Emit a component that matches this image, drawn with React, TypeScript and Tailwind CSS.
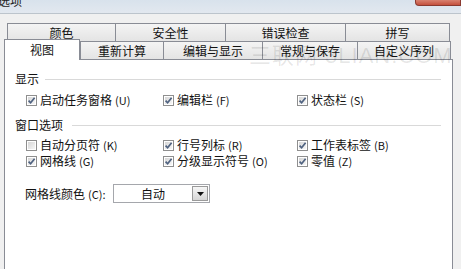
import type { ReactNode } from 'react';

const rows: { label: string; key: string; checked: boolean }[][] = [
  [
    { label: '启动任务窗格', key: 'U', checked: true },
    { label: '编辑栏', key: 'F', checked: true },
    { label: '状态栏', key: 'S', checked: true },
  ],
];

const windowRows: { label: string; key: string; checked: boolean }[][] = [
  [
    { label: '自动分页符', key: 'K', checked: false },
    { label: '行号列标', key: 'R', checked: true },
    { label: '工作表标签', key: 'B', checked: true },
  ],
  [
    { label: '网格线', key: 'G', checked: true },
    { label: '分级显示符号', key: 'O', checked: true },
    { label: '零值', key: 'Z', checked: true },
  ],
];

function CheckBox({ checked }: { checked: boolean }) {
  return (
    <svg width="11" height="11" viewBox="0 0 11 11" className="shrink-0">
      <defs>
        <linearGradient id="cbfill" x1="0" y1="0" x2="1" y2="1">
          <stop offset="0" stopColor="#d6d6d6" />
          <stop offset="1" stopColor="#f7f7f7" />
        </linearGradient>
      </defs>
      <rect x="0.5" y="0.5" width="10" height="10" fill="#fff" stroke="#8f8f8f" />
      <rect x="2" y="2" width="7" height="7" fill="url(#cbfill)" />
      {checked && (
        <path d="M2.6 5.6 L4.6 7.8 L8.6 2.8" fill="none" stroke="#4f6280" strokeWidth="1.7" />
      )}
    </svg>
  );
}

function Option({ label, hot, checked }: { label: string; hot: string; checked: boolean }) {
  return (
    <div className="flex h-[16px] items-center gap-[3px]">
      <CheckBox checked={checked} />
      <span className="whitespace-nowrap">
        {label}
        <span className="ml-[3px] text-[11px]">({hot})</span>
      </span>
    </div>
  );
}

function GroupTitle({ children, gap }: { children: ReactNode; gap: string }) {
  return (
    <div className="flex h-[14px] items-center pl-[10px] pr-[11px]">
      <span className="whitespace-nowrap leading-[14px]">{children}</span>
      <div className={`h-px flex-1 bg-[#d9d9d9] ${gap}`} />
    </div>
  );
}

function BackTab({ label, w, last }: { label: string; w: string; last?: boolean }) {
  return (
    <div
      className={`flex h-full items-center justify-center border-l border-t border-[#898c95] bg-gradient-to-b from-[#f4f4f4] to-[#e4e4e4] ${w} ${last ? 'border-r' : ''}`}
    >
      {label}
    </div>
  );
}

export default function App() {
  return (
    <div className="relative h-[269px] w-[461px] overflow-hidden bg-[#f0f0f0] font-['Noto_Sans_CJK_SC','Noto_Sans',sans-serif] text-[12px] text-[#111]">
      {/* title bar */}
      <div className="relative h-[14px] overflow-hidden border-b border-[#bcc4cc] bg-gradient-to-b from-[#d8e2ec] to-[#e2e8ef]">
        <div className="-ml-[2px] -mt-[6px] text-[12px] leading-[14px] text-[#222]">选项</div>
        <div className="absolute right-0 top-0 h-[6px] w-[46px] rounded-bl-[4px] border border-t-0 border-[#8a3a30] bg-gradient-to-b from-[#d88170] to-[#c4503d]" />
      </div>

      {/* tabs */}
      <div className="pt-[9px]">
        <div className="flex h-[18px] pl-[7px]">
          <BackTab label="颜色" w="w-[108px]" />
          <BackTab label="安全性" w="w-[110px]" />
          <BackTab label="错误检查" w="w-[120px]" />
          <BackTab label="拼写" w="w-[105px]" last />
        </div>
        <div className="flex h-[18px] items-end pl-[4px]">
          <div className="relative z-10 -mb-px flex h-[21px] w-[76px] items-center justify-center border-l border-r border-t border-[#898c95] bg-white">
            视图
          </div>
          <BackTab label="重新计算" w="w-[83px]" />
          <BackTab label="编辑与显示" w="w-[99px]" />
          <BackTab label="常规与保存" w="w-[95px]" />
          <BackTab label="自定义序列" w="w-[94px]" last />
        </div>
      </div>

      {/* page */}
      <div className="ml-[4px] h-[220px] w-[449px] border-l border-r border-t border-[#898c95] bg-white pt-[12px]">
        <GroupTitle gap="ml-[6px]">显示</GroupTitle>
        <div className="mt-[6px] pl-[21px]">
          {rows.map((r, i) => (
            <div key={i} className="grid grid-cols-[137px_134px_1fr]">
              {r.map((o) => (
                <Option key={o.key} label={o.label} hot={o.key} checked={o.checked} />
              ))}
            </div>
          ))}
        </div>

        <div className="mt-[10px]">
          <GroupTitle gap="ml-[9px]">窗口选项</GroupTitle>
        </div>
        <div className="mt-[5px] pl-[21px]">
          {windowRows.map((r, i) => (
            <div key={i} className="grid grid-cols-[137px_134px_1fr]">
              {r.map((o) => (
                <Option key={o.key} label={o.label} hot={o.key} checked={o.checked} />
              ))}
            </div>
          ))}
        </div>

        <div className="mt-[15px] flex items-center pl-[20px]">
          <span className="w-[88px] whitespace-nowrap">
            网格线颜色<span className="ml-[3px] text-[11px]">(C):</span>
          </span>
          <div className="flex h-[19px] w-[97px] items-center border border-[#a5a7ac] bg-white pr-px">
            <span className="flex-1 text-center">自动</span>
            <div className="flex h-[15px] w-[16px] items-center justify-center border border-[#9a9a9a] bg-gradient-to-b from-[#f6f6f6] to-[#d6d6d6]">
              <svg width="7" height="4" viewBox="0 0 7 4">
                <path d="M0 0 H7 L3.5 4 Z" fill="#111" />
              </svg>
            </div>
          </div>
        </div>
      </div>

      {/* watermark */}
      <div className="pointer-events-none absolute left-[249px] top-[39px] whitespace-nowrap font-['Liberation_Sans','Noto_Sans_CJK_SC',sans-serif] text-[22px] tracking-[1px] text-black/10">
        三联网 3LIAN.COM
      </div>
    </div>
  );
}
